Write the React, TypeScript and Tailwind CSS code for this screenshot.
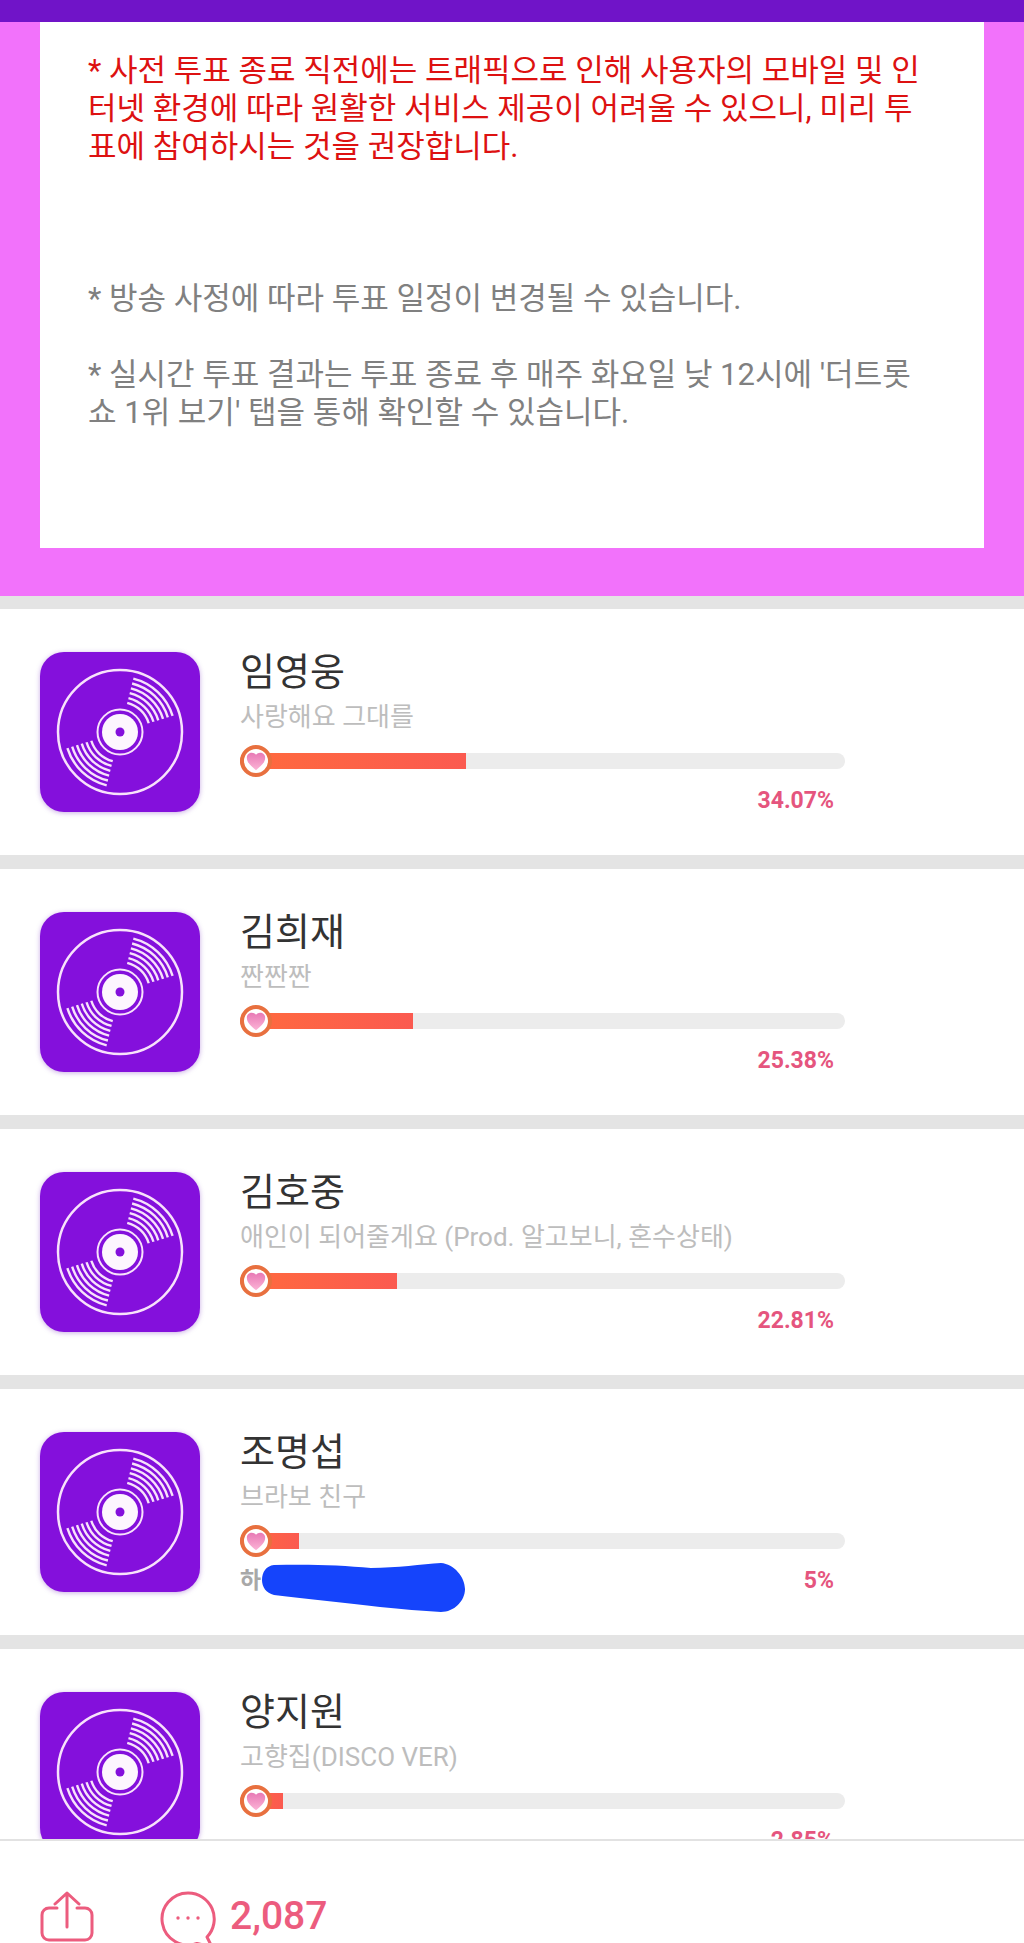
import React from 'react';

const songs = [
  { name: '임영웅', title: '사랑해요 그대를', fill: 'w-[226px]', pct: '34.07%' },
  { name: '김희재', title: '짠짠짠', fill: 'w-[173px]', pct: '25.38%' },
  { name: '김호중', title: '애인이 되어줄게요 (Prod. 알고보니, 혼수상태)', fill: 'w-[157px]', pct: '22.81%' },
  { name: '조명섭', title: '브라보 친구', fill: 'w-[59px]', pct: '5%', hidden: true },
  { name: '양지원', title: '고향집(DISCO VER)', fill: 'w-[43px]', pct: '2.85%' },
];

// one groove of the record, centred on 80,80
const arc = (r: number) => {
  const a = (-76 * Math.PI) / 180;
  const b = (-17 * Math.PI) / 180;
  return `M${80 + r * Math.cos(a)} ${80 + r * Math.sin(a)}A${r} ${r} 0 0 1 ${80 + r * Math.cos(b)} ${80 + r * Math.sin(b)}`;
};

function DiscIcon() {
  return (
    <div className="w-40 h-40 shrink-0 rounded-[24px] bg-[#8410dc] shadow-[0_1px_5px_rgba(100,20,180,0.35)]">
      <svg viewBox="0 0 160 160" className="w-40 h-40" fill="none" stroke="#f8e2fb">
        <circle cx="80" cy="80" r="62" strokeWidth="2.5" />
        <circle cx="80" cy="80" r="22.5" strokeWidth="2" />
        <circle cx="80" cy="80" r="18" fill="#fdf6fe" stroke="none" />
        <circle cx="80" cy="80" r="4.5" fill="#8410dc" stroke="none" />
        {[30, 35, 40, 45, 50, 55].map((r) => (
          <path key={r} d={arc(r)} strokeWidth="2.4" />
        ))}
        {[30, 35, 40, 45, 50, 55].map((r) => (
          <path key={r} d={arc(r)} strokeWidth="2.4" transform="rotate(180 80 80)" />
        ))}
      </svg>
    </div>
  );
}

function HeartKnob() {
  return (
    <div className="absolute left-0 top-[-8px] w-8 h-8 rounded-full border-[4px] border-[#e8703f] bg-white flex items-center justify-center">
      <svg viewBox="0 0 24 24" className="w-[20px] h-[20px]">
        <defs>
          <linearGradient id="heartFill" x1="0" y1="0" x2="0" y2="1">
            <stop offset="0" stopColor="#e878b4" />
            <stop offset="1" stopColor="#fbb4d6" />
          </linearGradient>
        </defs>
        <path
          d="M12 23C6 18 1 14 1 8C1 4 4 2 7 2c2 0 3.800 .8 5 2.500C13.200 2.800 15 2 17 2c3 0 6 2 6 6C23 14 18 18 12 23z"
          fill="url(#heartFill)"
        />
      </svg>
    </div>
  );
}

function SongRow({ song }: { song: (typeof songs)[number] }) {
  return (
    <div className="relative h-[246px] shrink-0 bg-white flex gap-10 pl-10 pt-[43px]">
      <DiscIcon />
      <div className="w-[605px]">
        <div className="text-[38px] leading-[40px] text-[#333333]">{song.name}</div>
        <div className="mt-[10px] text-[26px] leading-[30px] text-[#bdbdbd]">{song.title}</div>
        <div className="relative mt-[21px] h-4 rounded-full bg-[#ececec]">
          <div className={`${song.fill} h-4 rounded-l-full bg-gradient-to-r from-[#ff6a3c] to-[#fb5a50]`} />
          <HeartKnob />
        </div>
        <div className="mt-[18px] flex justify-between pr-[11px] text-[23px] leading-[28px] font-bold">
          <span className="text-[#a8a8a8]">{song.hidden ? '하' : ''}</span>
          <span className="text-[#e5557e]">{song.pct}</span>
        </div>
      </div>
      {song.hidden && (
        <svg viewBox="0 0 203 50" className="absolute left-[262px] top-[174px] w-[203px] h-[50px]">
          <path
            d="M12 2C45 1 80 2 109 5C135 5 160 1 179 0C192 1 203 14 203 26C203 38 192 49 179 49C160 48 140 46 118 44C85 40 45 36 12 32C4 30 0 24 0 17C0 9 4 3 12 2z"
            fill="#1544fb"
          />
        </svg>
      )}
    </div>
  );
}

export default function App() {
  return (
    <div className="w-[1024px] h-[1943px] overflow-hidden flex flex-col bg-white font-['Roboto','Noto_Sans_CJK_KR',sans-serif]">
      {/* Notice */}
      <div className="h-[22px] shrink-0 bg-[#7014c8]" />
      <div className="shrink-0 h-[574px] bg-[#f272fb] px-10">
        <div className="h-[526px] bg-white pl-[48px] pr-[54px] pt-[30px] text-[31px] leading-[38px]">
          <p className="text-[#dd1111]">
            * 사전 투표 종료 직전에는 트래픽으로 인해 사용자의 모바일 및 인터넷 환경에 따라 원활한 서비스 제공이 어려울 수 있으니, 미리 투표에 참여하시는 것을 권장합니다.
          </p>
          <p className="mt-[114px] text-[#808080]">* 방송 사정에 따라 투표 일정이 변경될 수 있습니다.</p>
          <p className="mt-[38px] text-[#808080]">
            * 실시간 투표 결과는 투표 종료 후 매주 화요일 낮 12시에 '더트롯쇼 1위 보기' 탭을 통해 확인할 수 있습니다.
          </p>
        </div>
      </div>
      <div className="h-[13px] shrink-0 bg-[#e4e4e4]" />

      {/* Song list */}
      <div className="flex-1 min-h-0 overflow-hidden flex flex-col">
        {songs.map((song) => (
          <React.Fragment key={song.name}>
            <SongRow song={song} />
            <div className="h-[14px] shrink-0 bg-[#e4e4e4]" />
          </React.Fragment>
        ))}
      </div>

      {/* Footer */}
      <div className="h-[104px] shrink-0 border-t-2 border-[#e2e2e2] bg-white overflow-hidden flex pl-10 pt-[50px]">
        <svg viewBox="0 0 54 56" className="w-[54px] h-[56px] shrink-0" fill="none" stroke="#ec5c7e" strokeWidth="3" strokeLinecap="round" strokeLinejoin="round">
          <path d="M17 17H9a7 7 0 0 0-7 7v18a7 7 0 0 0 7 7h36a7 7 0 0 0 7-7V24a7 7 0 0 0-7-7h-8" />
          <path d="M27 36V2M15 13L27 2l12 11" />
        </svg>
        <svg viewBox="0 0 56 60" className="ml-[66px] w-[56px] h-[60px] shrink-0" fill="none" stroke="#ec5c7e" strokeWidth="3" strokeLinejoin="round">
          <path d="M28 2a26 26 0 1 0 9 50.400L52 56l-5-10A26 26 0 0 0 28 2z" />
          <circle cx="18" cy="27" r="1.700" fill="#ec5c7e" stroke="none" />
          <circle cx="28" cy="27" r="1.700" fill="#ec5c7e" stroke="none" />
          <circle cx="38" cy="27" r="1.700" fill="#ec5c7e" stroke="none" />
        </svg>
        <span className="ml-[14px] mt-[1px] text-[39px] leading-[48px] font-medium text-[#ec5c7e]">2,087</span>
      </div>
    </div>
  );
}
